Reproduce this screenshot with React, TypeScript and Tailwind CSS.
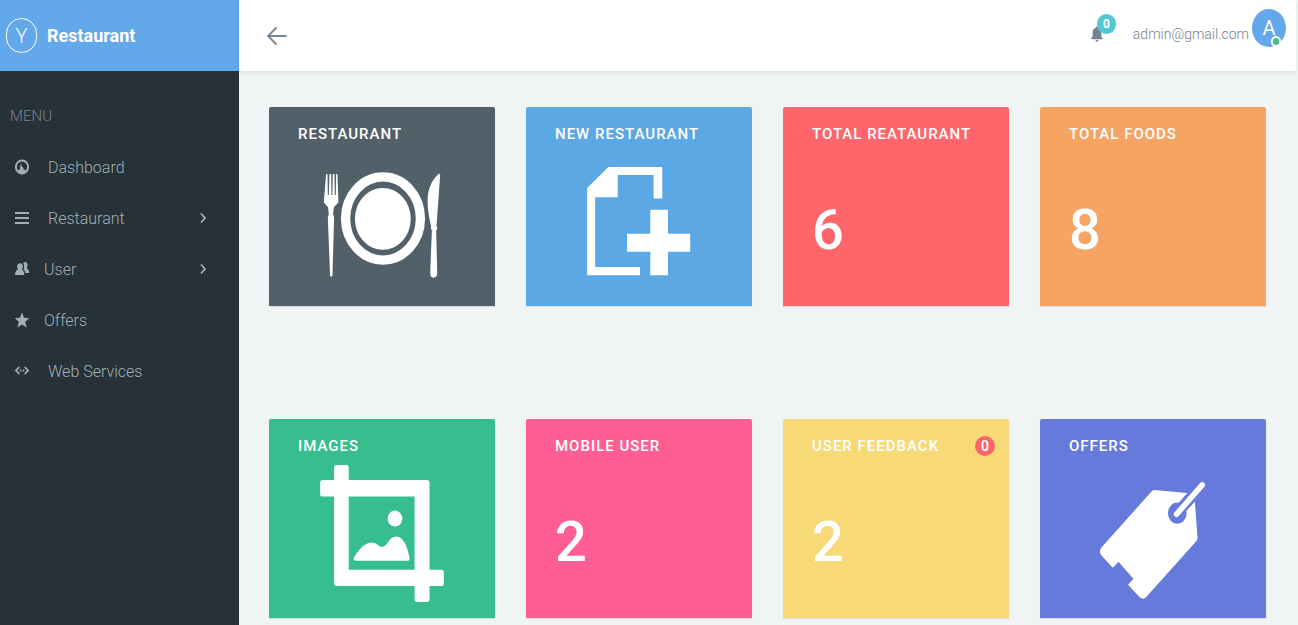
import React from 'react';

const DashboardIcon = () => (
  <svg viewBox="0 0 16 16" className="w-4 h-4" fill="currentColor">
    <ellipse cx="8" cy="8" rx="6.100" ry="6.600" fill="none" stroke="currentColor" strokeWidth="2" />
    <path d="M6.800 4.200L8.200 7.800 9 8.200l.8 2.200 2.200.8-1.500 2.600-2.500.8-2.500-.8L4 11.200l1.800-.8z" />
  </svg>
);

const ListIcon = () => (
  <svg viewBox="0 0 16 16" className="w-4 h-4" fill="currentColor">
    <path d="M1 2h14v2H1zM1 7h14v2H1zM1 12h14v2H1z" />
  </svg>
);

const UsersIcon = () => (
  <svg viewBox="0 0 16 16" className="w-4 h-4" fill="currentColor">
    <path d="M6.200 2.200c1.800 0 2.700 1.200 2.700 2.800 0 1-.3 1.900-.8 2.500v.9c1.400.6 2.100 2.700 2.200 5.600H1c.1-2.900.9-4.900 2.700-5.600v-.9C3.200 6.900 3 6 3.200 5c0-1.600 1.200-2.800 3-2.800z" />
    <path d="M9.300 2c.5-.6 1.100-.9 1.800-.9 1.500 0 2.500 1.300 2.500 2.900 0 1-.3 1.800-.8 2.400v.9c1.500.7 2.300 2.200 2.400 4.700h-3.900c-.2-1.700-.8-3.300-1.900-4.100.5-.8.8-1.700.7-2.800 0-1.200-.3-2.300-.8-3.100z" />
  </svg>
);

const StarIcon = () => (
  <svg viewBox="0 0 16 16" className="w-4 h-4" fill="currentColor">
    <path d="M8 .5l2 5.200 5.300.3-4.100 3.700 1.400 5.700L8 12.400l-4.600 3 1.400-5.700L.7 6 6 5.700z" />
  </svg>
);

const CodeIcon = () => (
  <svg viewBox="0 0 16 16" className="w-4 h-4" fill="none" stroke="currentColor" strokeWidth="1.800">
    <path d="M5.300 4L2 7.500 5.300 11M10.700 4L14 7.500 10.700 11" />
    <path d="M5.800 7.500h1.600M8.700 7.500h1.600" />
  </svg>
);

const PlateIcon = () => (
  <svg viewBox="180 174 372 412" className="w-[124px] h-[137px]" fill="white">
    <path d="M198 237h4l1 63h3l2-63h5l1 63h3l1-63h5l1 63h3l1-63h4l3 86-14 14-2 22 3 8-5 176q-4 6-7 0l-7-176 3-8-2-22-13-14z" />
    <ellipse cx="369" cy="371" rx="112.500" ry="125" fill="none" stroke="white" strokeWidth="28" />
    <ellipse cx="368.500" cy="372" rx="84" ry="93" />
    <path d="M541 239q-2-5-8 1c-20 19-29 45-30 76 0 32 6 56 11 79l-1 3 1 6 2 2-5 130q0 13 10 13 11 0 11-13l-3-130 3-3v-6l-2-3z" />
  </svg>
);

const NewFileIcon = () => (
  <svg viewBox="183 174 372 412" className="w-[124px] h-[137px]" fill="white">
    <path d="M277 216h162v95h-26v-71H305v67h-68v210h135v25H213V279z" />
    <path d="M403 345h53v72h67v54h-67v71h-53v-71h-70v-54h70z" />
  </svg>
);

const CropIcon = () => (
  <svg viewBox="180 165 372 412" className="w-[124px] h-[137px]" fill="white">
    <path
      fillRule="evenodd"
      d="M229 165h30q7 0 7 8v37h234q9 0 9 9v261h35q8 0 8 8v33q0 8-8 8h-35v40q0 8-8 8h-29q-8 0-8-8v-40H231q-9 0-9-9V260h-34q-8 0-8-8v-34q0-8 8-8h34v-37q0-8 7-8zM266 260v220h198V260z"
    />
    <ellipse cx="405" cy="326" rx="22" ry="24" />
    <path d="M281 445c14-26 34-47 54-47 16 0 20 13 32 13 15 0 20-31 41-31 25 0 36 37 41 66q0 7-5 7H285q-6-1-4-8z" />
  </svg>
);

const TagIcon = () => (
  <svg viewBox="183 165 372 412" className="w-[124px] h-[137px]">
    <path
      fill="white"
      d="M366 243q3-3 8-3l97 9 24 28 8 106q0 6-4 11L348 563q-9 9-19 0l-35-38 16-18-45-51-17 18-34-37q-9-12 0-24z"
    />
    <ellipse cx="442" cy="310" rx="28" ry="32" fill="#667adb" />
    <path d="M440 310L505 239" stroke="#667adb" strokeWidth="34" />
    <path d="M440 313L517 225" stroke="white" strokeWidth="17" strokeLinecap="round" />
  </svg>
);

const menu = [
  { label: 'Dashboard', icon: <DashboardIcon />, gap: 'gap-[18px]' },
  { label: 'Restaurant', icon: <ListIcon />, gap: 'gap-[18px]', expandable: true },
  { label: 'User', icon: <UsersIcon />, gap: 'gap-[14px]', expandable: true },
  { label: 'Offers', icon: <StarIcon />, gap: 'gap-[14px]' },
  { label: 'Web Services', icon: <CodeIcon />, gap: 'gap-[18px]' },
];

type Card = {
  title: string;
  color: string;
  icon?: React.ReactNode;
  value?: string;
  badge?: string;
};

const cards: Card[] = [
  { title: 'Restaurant', color: 'bg-[#526069]', icon: <PlateIcon /> },
  { title: 'New Restaurant', color: 'bg-[#5ca8e5]', icon: <NewFileIcon /> },
  { title: 'Total Reataurant', color: 'bg-[#ff666b]', value: '6' },
  { title: 'Total Foods', color: 'bg-[#f5a463]', value: '8' },
  { title: 'Images', color: 'bg-[#37be8f]', icon: <CropIcon /> },
  { title: 'Mobile User', color: 'bg-[#ff5e93]', value: '2' },
  { title: 'User Feedback', color: 'bg-[#f7d978]', value: '2', badge: '0' },
  { title: 'Offers', color: 'bg-[#667adb]', icon: <TagIcon /> },
];

const Sidebar: React.FC = () => (
  <aside className="w-[239px] shrink-0 bg-[#263238]">
    <a href="#" className="flex items-center gap-[10px] h-[71px] pl-[6px] bg-[#62a8ea] text-white">
      <span className="flex items-center justify-center w-[31px] h-[35px] rounded-full border border-white text-xl font-light">
        Y
      </span>
      <span className="text-lg font-bold">Restaurant</span>
    </a>
    <nav className="pt-5">
      <div className="flex items-center h-[51px] pl-[10px] text-[15px] font-light text-[#76838f]">MENU</div>
      {menu.map((item) => (
        <a
          key={item.label}
          href="#"
          className={`flex items-center h-[51px] pl-[14px] pr-[31px] text-base font-light text-[#a3afb7] ${item.gap}`}
        >
          <span className="pb-0.5">{item.icon}</span>
          <span className="flex-1">{item.label}</span>
          {item.expandable && (
            <span className="pb-0.5">
              <svg viewBox="0 0 10 12" className="w-[10px] h-3" fill="none" stroke="currentColor" strokeWidth="1.800">
                <path d="M3 1.500L7 6l-4 4.500" />
              </svg>
            </span>
          )}
        </a>
      ))}
    </nav>
  </aside>
);

const Header: React.FC = () => (
  <header className="flex items-center justify-between h-[71px] mr-0.5 pl-7 pr-[10px] bg-white shadow-[0_2px_4px_rgba(0,0,0,0.08)]">
    <button type="button" aria-label="Toggle menu" className="text-[#76838f]">
      <svg viewBox="0 0 20 20" className="w-5 h-5" fill="none" stroke="currentColor" strokeWidth="1.800">
        <path d="M9.500 1.500L1 10l8.500 8.500M1 10h18.500" />
      </svg>
    </button>
    <div className="flex items-center h-14 self-start">
      <button type="button" aria-label="Notifications" className="relative mr-[30px] pt-3 text-[#76838f]">
        <svg viewBox="0 0 12 16" className="w-3 h-4" fill="currentColor">
          <path d="M6 .5c.8 0 1.200.6 1.200 1.300C9.200 2.400 10.300 4 10.300 6v4.300l1.400 1.900v1.100H.3v-1.100l1.400-1.900V6c0-2 1.100-3.600 3.100-4.200C4.800 1.100 5.200.5 6 .5zM4.400 14h3.200q-.3 1.700-1.600 1.700T4.400 14z" />
        </svg>
        <span className="absolute left-[6px] top-0 flex items-center justify-center w-[19px] h-5 rounded-full bg-[#57c7d4] text-xs font-bold text-white">
          0
        </span>
      </button>
      <a href="#" className="flex items-center gap-[3px] text-sm font-light text-[#76838f]">
        <span className="pt-3">admin@gmail.com</span>
        <span className="relative flex items-center justify-center w-[34px] h-[38px] rounded-[50%] bg-[#62a8ea] text-xl font-normal text-white">
          A
          <span className="absolute right-[5px] bottom-0 w-[10px] h-[11px] rounded-full border-2 border-white bg-[#46be8a]" />
        </span>
      </a>
    </div>
  </header>
);

const App: React.FC = () => {
  return (
    <div className="flex min-h-screen bg-[#f1f4f5] font-['Roboto',sans-serif]">
      <Sidebar />
      <div className="flex-1 min-w-0">
        <Header />
        <main className="grid grid-cols-4 gap-x-[31px] gap-y-[113px] pt-9 pl-[30px] pr-8 pb-2">
          {cards.map((card) => (
            <a
              key={card.title}
              href="#"
              className={`block px-[29px] pt-[15px] pb-4 rounded-t-xs text-white shadow-[0_1px_1px_rgba(0,0,0,0.1)] ${card.color}`}
            >
              <div className="flex items-center justify-between -mr-[15px] mb-[7px]">
                <h2 className="text-[15px] leading-6 font-medium uppercase tracking-[1px] whitespace-nowrap">{card.title}</h2>
                {card.badge && (
                  <span className="flex items-center justify-center w-5 h-5 rounded-full bg-[#f96868] text-sm font-medium">
                    {card.badge}
                  </span>
                )}
              </div>
              <div className="flex items-center h-[137px]">
                {card.icon && <div className="mx-auto">{card.icon}</div>}
                {card.value && <div className="pt-4 text-[56px] leading-none font-medium">{card.value}</div>}
              </div>
            </a>
          ))}
        </main>
      </div>
    </div>
  );
};

export default App;
